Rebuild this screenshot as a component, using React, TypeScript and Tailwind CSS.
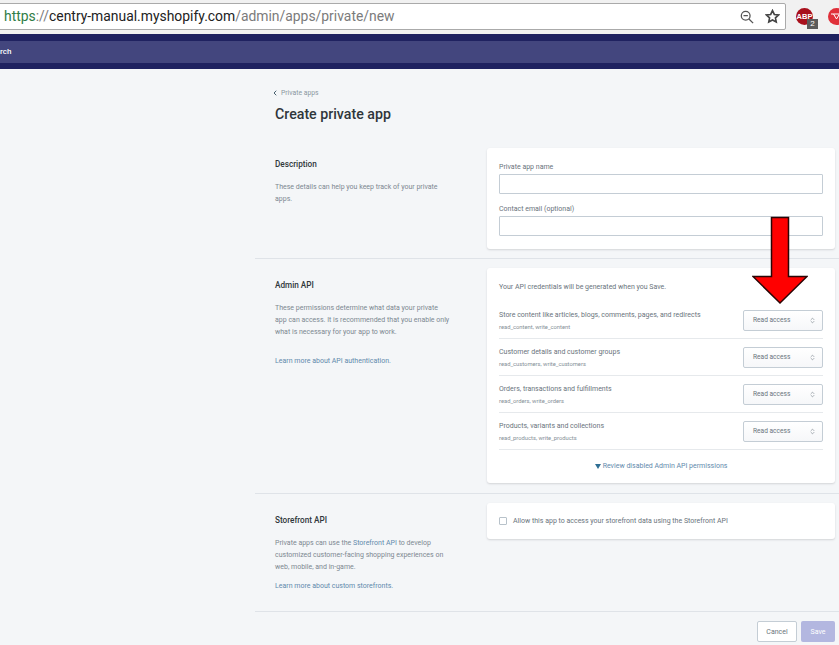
import React from "react";
import { ChevronLeft, ChevronsUpDown } from "lucide-react";

const permissions = [
  { title: "Store content like articles, blogs, comments, pages, and redirects", scope: "read_content, write_content" },
  { title: "Customer details and customer groups", scope: "read_customers, write_customers" },
  { title: "Orders, transactions and fulfillments", scope: "read_orders, write_orders" },
  { title: "Products, variants and collections", scope: "read_products, write_products" },
];

const BrowserBar = () => (
  <div className="h-[34px] bg-[#f1f1f1] flex items-start">
    <div className="mt-[3px] ml-[-2px] w-[788px] h-[27px] shrink-0 bg-white border border-[#aaaaaa] rounded-[2px] flex items-center pl-[5px] pr-[5px]">
      <p className="text-[13.9px] leading-none text-[#7b7b7b] flex-1 whitespace-nowrap font-['Roboto',sans-serif]">
        <span className="text-[#2f7d46]">https</span>
        <span>://</span>
        <span className="text-[#222222]">centry-manual.myshopify.com</span>
        /admin/apps/private/new
      </p>
      <svg width="14" height="14" viewBox="0 0 16 16" fill="none" stroke="#555555" strokeWidth="1.5" className="mr-[11px]">
        <circle cx="6.5" cy="6.5" r="5" />
        <path d="M4 6.5h5M10.2 10.2l4.8 4.8" />
      </svg>
      <svg width="15" height="15" viewBox="0 0 24 24" fill="none" stroke="#444444" strokeWidth="2.6">
        <path d="M12 2.5l2.9 6.2 6.8.8-5 4.6 1.3 6.7L12 17.5l-6 3.3 1.3-6.7-5-4.6 6.8-.8z" />
      </svg>
    </div>
    <div className="relative ml-[10px] mt-[8px] w-[17px] h-[17px] rounded-full bg-[#a8101c] flex items-center justify-center shrink-0">
      <span className="text-[7.5px] leading-none font-bold text-white font-['Liberation_Sans',sans-serif]">ABP</span>
      <span className="absolute left-[11px] top-[11px] w-[11px] h-[10px] bg-[#5b5b5b] text-white text-[8px] leading-[10px] text-center font-['Liberation_Sans',sans-serif]">
        2
      </span>
    </div>
    <div className="ml-[15px] mt-[8px] w-[17px] h-[17px] rounded-full bg-[#e0303a] flex items-center justify-center shrink-0">
      <svg width="11" height="9" viewBox="0 0 11 9" fill="none" stroke="#ffffff" strokeWidth="1">
        <path d="M0 2h11M2.5 2l3 5 3-5" />
      </svg>
    </div>
  </div>
);

const NavBar = () => (
  <div className="h-[35px] bg-[#1f2260] py-[7px]">
    <div className="h-[22px] bg-[#43467e] flex items-center">
      <span className="text-[8px] font-medium text-white">rch</span>
    </div>
  </div>
);

const Heading = ({ children }: { children: React.ReactNode }) => (
  <h2 className="text-[8.2px] leading-[12px] font-medium text-[#30373b]">{children}</h2>
);

const Field = ({ label }: { label: string }) => (
  <div>
    <p className="text-[7px] leading-[12px] pt-[1px] mb-[1px] text-[#6a747c]">{label}</p>
    <div className="h-[20px] bg-white border border-[#c4cdd5] rounded-[1px]" />
  </div>
);

const SelectBox = () => (
  <div className="w-[80px] h-[21px] shrink-0 border border-[#c4cdd5] rounded-[2px] bg-gradient-to-b from-white to-[#f6f7f9] flex items-center justify-between pl-[9px] pr-[6px]">
    <span className="text-[6.6px] pt-[2px] text-[#6a747c]">Read access</span>
    <ChevronsUpDown size={7} color="#6b7780" strokeWidth={2} />
  </div>
);

const PermissionRow = ({ title, scope, first }: { title: string; scope: string; first: boolean }) => (
  <div className={`flex items-center justify-between ${first ? "h-[36px]" : "h-[37px] border-t border-[#e6e9ec]"}`}>
    <div>
      <p className="text-[7px] leading-[12px] text-[#6a747c]">{title}</p>
      <p className="text-[5.8px] leading-[10px] mt-[1px] text-[#858f97]">{scope}</p>
    </div>
    <SelectBox />
  </div>
);

const Card = ({ className, children }: { className: string; children: React.ReactNode }) => (
  <div className={`w-[348px] bg-white rounded-[3px] shadow-[0_1px_2px_rgba(63,63,68,0.18)] ${className}`}>{children}</div>
);

const App = () => {
  return (
    <div className="relative w-[839px] h-[645px] overflow-hidden bg-[#f4f6f8] font-['Roboto',sans-serif]">
      <BrowserBar />
      <NavBar />

      <div className="ml-[255px]">
        <div className="pl-[16px] h-[79px] pt-[19px]">
          <p className="flex items-center text-[6.8px] leading-[10px] text-[#8a96a0]">
            <ChevronLeft size={8} strokeWidth={3} color="#47606e" className="mr-[2px]" />
            Private apps
          </p>
          <h1 className="ml-[4px] mt-[6px] text-[14.2px] leading-[20px] font-medium text-[#2f363b]">Create private app</h1>
        </div>

        {/* Description */}
        <section className="flex h-[111px] border-b border-[#dfe3e8]">
          <div className="w-[232px] pl-[20px] pt-[10px]">
            <Heading>Description</Heading>
            <p className="mt-[11px] w-[180px] text-[7px] leading-[12px] text-[#7d8891]">
              These details can help you keep track of your private apps.
            </p>
          </div>
          <Card className="h-[101px] px-[12px] pt-[12px] flex flex-col gap-[8px]">
            <Field label="Private app name" />
            <Field label="Contact email (optional)" />
          </Card>
        </section>

        {/* Admin API */}
        <section className="flex h-[235px] border-b border-[#dfe3e8] pt-[9px]">
          <div className="w-[232px] pl-[20px] pt-[11px]">
            <Heading>Admin API</Heading>
            <p className="mt-[11px] text-[7px] leading-[12px] text-[#7d8891]">
              These permissions determine what data your private
              <br />
              app can access. It is recommended that you enable only
              <br />
              what is necessary for your app to work.
            </p>
            <p className="mt-[17px] text-[7px] leading-[12px] text-[#5f8aac]">Learn more about API authentication.</p>
          </div>
          <Card className="h-[215px] px-[12px] pt-[13px]">
            <p className="text-[7px] leading-[12px] text-[#6a747c] mb-[9px]">Your API credentials will be generated when you Save.</p>
            {permissions.map((p, i) => (
              <PermissionRow key={p.scope} title={p.title} scope={p.scope} first={i === 0} />
            ))}
            <div className="border-t border-[#e6e9ec] pt-[10px] flex justify-center items-center text-[7px] leading-[12px] text-[#5f8aac]">
              <svg width="6" height="5" viewBox="0 0 6 5" className="mr-[2px]">
                <path d="M0 0h6L3 5z" fill="#2f6f94" />
              </svg>
              Review disabled Admin API permissions
            </div>
          </Card>
        </section>

        {/* Storefront API */}
        <section className="flex h-[118px] border-b border-[#dfe3e8] pt-[9px]">
          <div className="w-[232px] pl-[20px] pt-[11px]">
            <Heading>Storefront API</Heading>
            <p className="mt-[11px] w-[175px] text-[7px] leading-[12px] text-[#7d8891]">
              Private apps can use the <span className="text-[#5f8aac]">Storefront API</span> to develop customized
              customer-facing shopping experiences on web, mobile, and in-game.
            </p>
            <p className="mt-[7px] text-[7px] leading-[12px] text-[#5f8aac]">Learn more about custom storefronts.</p>
          </div>
          <Card className="h-[36px] pl-[12px] flex items-center">
            <span className="w-[8px] h-[8px] mr-[6px] border border-[#b8c2ca] rounded-[1px] bg-white" />
            <span className="text-[7px] pt-[1px] text-[#6a747c]">Allow this app to access your storefront data using the Storefront API</span>
          </Card>
        </section>

        <div className="flex justify-end gap-[4px] w-[580px] pt-[9px]">
          <button className="w-[40px] h-[21px] pt-[1px] bg-white border border-[#c4cdd5] rounded-[2px] text-[7px] text-[#6a747c]">Cancel</button>
          <button className="w-[34px] h-[21px] pt-[1px] bg-[#b3b7e0] rounded-[2px] text-[7px] text-white">Save</button>
        </div>
      </div>

      {/* red arrow pasted over the screenshot */}
      <svg className="absolute left-[752px] top-[216px]" width="56" height="89" viewBox="0 0 56 89">
        <path d="M19.5 1.5h17v59h18.5L28 87 1 60.5h18.5z" fill="#ff0000" stroke="#2a0505" strokeWidth="1.5" />
      </svg>
    </div>
  );
};

export default App;
